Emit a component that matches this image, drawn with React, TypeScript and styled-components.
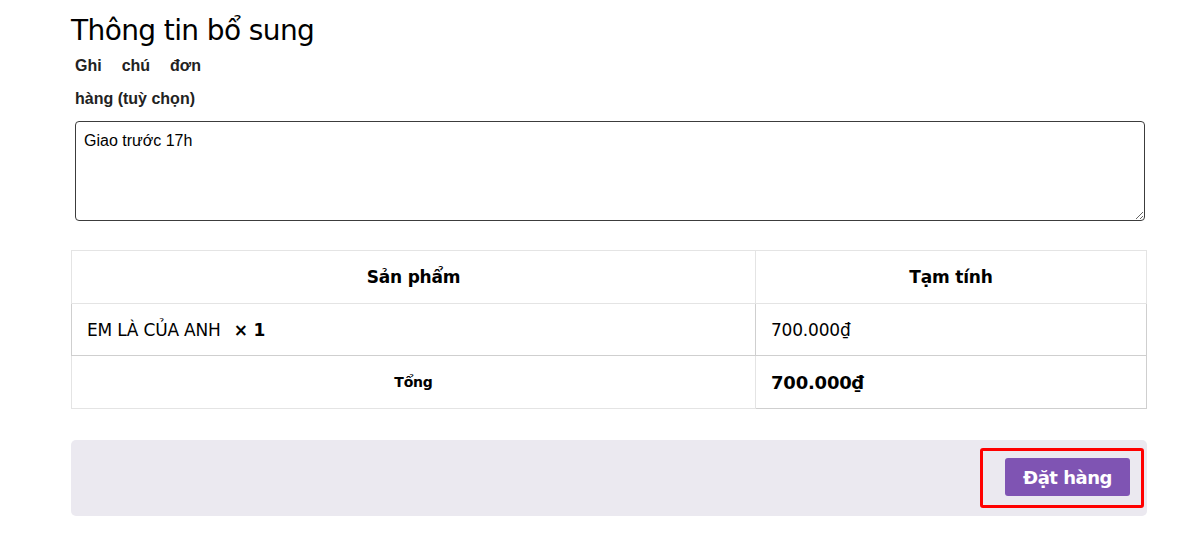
import React from "react";
import styled, { createGlobalStyle } from "styled-components";

const Global = createGlobalStyle`
  html, body { margin: 0; padding: 0; background: #fff; }
  body { font-family: "Liberation Sans", Arial, sans-serif; color: #000; }
  * { box-sizing: border-box; }
`;

const Page = styled.div`
  width: 1196px;
  height: 546px;
  padding: 15px 49px 0 71px;
  overflow: hidden;
`;

const Title = styled.h3`
  margin: 0;
  font-family: "DejaVu Sans", Verdana, sans-serif;
  font-weight: 400;
  font-size: 28px;
  line-height: 32px;
  letter-spacing: -0.6px;
  color: #000;
`;

const Field = styled.div`
  padding-left: 4px;
  display: flex;
  flex-direction: column;
`;

const Label = styled.label`
  display: block;
  width: 126px;
  margin-top: 2px;
  font-family: "Liberation Sans", Arial, sans-serif;
  font-weight: 700;
  font-size: 16px;
  line-height: 33px;
  text-align: justify;
  color: #222;
`;

const TextArea = styled.textarea`
  display: block;
  width: 1070px;
  height: 100px;
  margin-top: 6px;
  padding: 10px 8px 8px;
  border: 1px solid #3c3c3c;
  border-radius: 4px;
  font-family: "Liberation Sans", Arial, sans-serif;
  font-size: 16px;
  color: #000;
  resize: vertical;
  outline: none;
`;

const Table = styled.table`
  width: 1076px;
  margin-top: 29px;
  border-collapse: collapse;
  font-family: "DejaVu Sans", Tahoma, sans-serif;
  border: 1px solid #e6e6e6;
`;

const Cell = styled.td<{ $center?: boolean; $strong?: boolean; $size?: number; $dark?: boolean; $wide?: boolean }>`
  height: ${(p) => (p.$wide ? 53 : 52)}px;
  padding: 0 15px 0 15px;
  border: 1px solid ${(p) => (p.$dark ? "#cfcfcf" : "#e4e4e4")};
  text-align: ${(p) => (p.$center ? "center" : "left")};
  font-weight: ${(p) => (p.$strong ? 700 : 400)};
  font-size: ${(p) => p.$size ?? 17}px;
  letter-spacing: -0.2px;
  color: #000;
  vertical-align: middle;
`;

const HeadCell = styled.th<{ $w?: number }>`
  height: 53px;
  width: ${(p) => (p.$w ? `${p.$w}px` : "auto")};
  border: 1px solid #e4e4e4;
  text-align: center;
  font-weight: 700;
  font-size: 17px;
  letter-spacing: -0.2px;
  color: #000;
`;

const Qty = styled.strong`
  margin-left: 8px;
  font-weight: 700;
`;

const Actions = styled.div`
  margin-top: 31px;
  width: 1076px;
  height: 76px;
  background: #ebe9f0;
  border-radius: 5px;
  display: flex;
  align-items: center;
  justify-content: flex-end;
  padding-right: 3px;
`;

const Highlight = styled.div`
  border: 3px solid #f00;
  border-radius: 3px;
  padding: 7px 11px 9px 22px;
  display: flex;
`;

const Button = styled.button`
  width: 125px;
  height: 38px;
  border: 0;
  border-radius: 3px;
  background: #7f54b3;
  color: #fff;
  font-family: "DejaVu Sans", Tahoma, sans-serif;
  font-weight: 700;
  font-size: 18px;
  letter-spacing: -0.5px;
  cursor: pointer;
`;

export default function App() {
  return (
    <>
      <Global />
      <Page>
        <Title>Thông tin bổ sung</Title>
        <Field>
          <Label htmlFor="note">Ghi chú đơn hàng (tuỳ chọn)</Label>
          <TextArea id="note" defaultValue="Giao trước 17h" spellCheck />
        </Field>
        <Table>
          <thead>
            <tr>
              <HeadCell $w={684}>Sản phẩm</HeadCell>
              <HeadCell>Tạm tính</HeadCell>
            </tr>
          </thead>
          <tbody>
            <tr>
              <Cell $dark>
                EM LÀ CỦA ANH <Qty>× 1</Qty>
              </Cell>
              <Cell $dark>700.000₫</Cell>
            </tr>
            <tr>
              <Cell $center $strong $size={14} $wide>Tổng</Cell>
              <Cell $strong $dark $wide $size={18}>700.000₫</Cell>
            </tr>
          </tbody>
        </Table>
        <Actions>
          <Highlight>
            <Button type="button">Đặt hàng</Button>
          </Highlight>
        </Actions>
      </Page>
    </>
  );
}
